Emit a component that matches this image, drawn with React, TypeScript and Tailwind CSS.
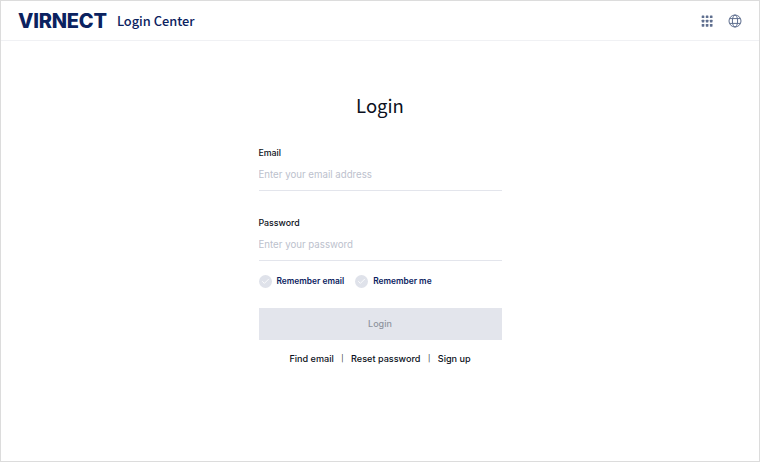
import { Check } from "lucide-react";

function GridIcon() {
  const dots = [0, 1, 2];
  return (
    <svg width="12" height="12" viewBox="0 0 12 12" fill="#5f6f8f">
      {dots.map((y) =>
        dots.map((x) => (
          <rect key={`${x}-${y}`} x={0.7 + x * 4.1} y={0.5 + y * 4.3} width="2.6" height="2.6" rx="0.4" />
        ))
      )}
    </svg>
  );
}

function GlobeIcon() {
  return (
    <svg width="14" height="14" viewBox="0 0 14 14" fill="none" stroke="#5f6f8f" strokeWidth="1">
      <circle cx="7" cy="7" r="6" />
      <ellipse cx="7" cy="7" rx="2.6" ry="6" />
      <path d="M1.6 4.6h10.8M1.6 9.4h10.8" />
    </svg>
  );
}

function Field({ label, placeholder, className }: { label: string; placeholder: string; className?: string }) {
  return (
    <div className={className}>
      <div className="text-[8.8px] leading-[14px] font-medium text-[#0b1020]">{label}</div>
      <input
        readOnly
        placeholder={placeholder}
        className="mt-[3px] block w-full h-[28px] pb-[4px] border-b border-[#e3e5ec] text-[9.7px] text-[#0b1020] placeholder:text-[#bcc1cd] outline-none bg-transparent"
      />
    </div>
  );
}

function Remember({ label }: { label: string }) {
  return (
    <label className="flex items-center gap-[5px]">
      <span className="w-[13px] h-[13px] rounded-full bg-[#dfe2ea] flex items-center justify-center">
        <Check size={9} strokeWidth={2.2} className="text-white" />
      </span>
      <span className="text-[8.4px] font-semibold text-[#0b2260]">{label}</span>
    </label>
  );
}

export default function App() {
  return (
    <div className="w-[760px] h-[462px] bg-white border border-[#dcdcdc] overflow-hidden flex flex-col font-['Inter','Noto_Sans',sans-serif]">
      {/* HEADER */}
      <header className="h-[40px] shrink-0 border-b border-[#f0f1f4] flex items-center pl-[17px] pr-[17px]">
        <span className="font-extrabold text-[20px] tracking-[-0.2px] text-[#0b2260]">VIRNECT</span>
        <span className="ml-[10px] font-['Noto_Sans_CJK_KR',sans-serif] text-[12.8px] font-medium text-[#0b2260]">Login Center</span>
        <div className="ml-auto flex items-center gap-[15px]">
          <GridIcon />
          <GlobeIcon />
        </div>
      </header>

      {/* FORM */}
      <main className="w-[243px] mx-auto flex flex-col">
        <h1 className="mt-[49px] font-['Noto_Sans_CJK_KR',sans-serif] text-[18.5px] leading-[30px] font-normal text-center text-[#0b1020]">Login</h1>
        <Field className="mt-[26px]" label="Email" placeholder="Enter your email address" />
        <Field className="mt-[25px]" label="Password" placeholder="Enter your password" />

        <div className="mt-[14px] flex items-center gap-[11px]">
          <Remember label="Remember email" />
          <Remember label="Remember me" />
        </div>

        <button className="mt-[20px] h-[32px] bg-[#e3e5ec] text-[9px] font-medium text-[#8f949e]">Login</button>

        <div className="mt-[12px] flex items-center justify-center text-[9.1px] font-medium text-[#0b1020]">
          <span>Find email</span>
          <span className="mx-[7.5px] text-[7px] font-normal">|</span>
          <span>Reset password</span>
          <span className="mx-[7.5px] text-[7px] font-normal">|</span>
          <span>Sign up</span>
        </div>
      </main>
    </div>
  );
}
